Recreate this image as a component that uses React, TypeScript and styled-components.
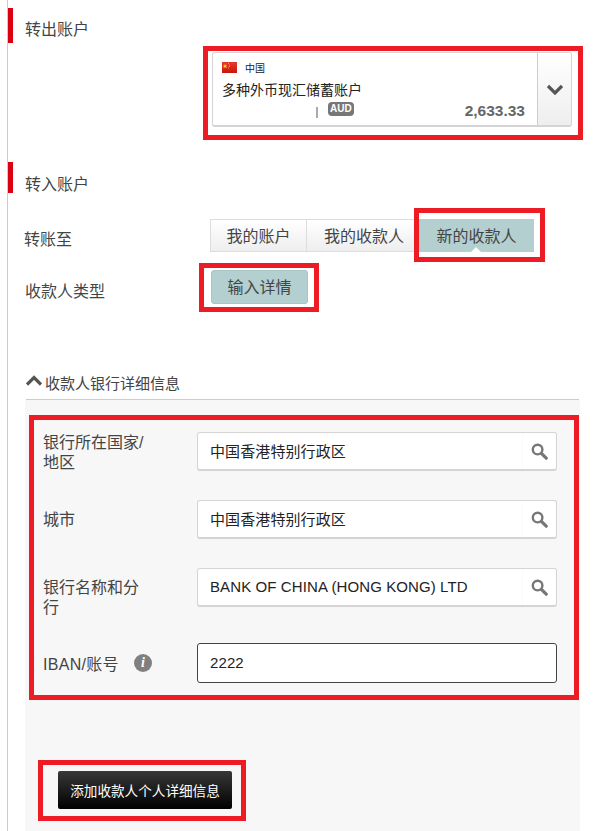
import React from 'react';
import styled, { createGlobalStyle } from 'styled-components';

const GlobalStyle = createGlobalStyle`
  html, body {
    margin: 0;
    padding: 0;
    background: #fff;
  }
  * {
    box-sizing: border-box;
  }
  body {
    font-family: 'Liberation Sans', 'Noto Sans CJK SC', sans-serif;
    color: #444;
  }
`;

const SearchIcon = () => (
  <svg width="17" height="17" viewBox="0 0 17 17" fill="none">
    <circle cx="6.6" cy="6.6" r="4.8" stroke="#777" strokeWidth="2.4" />
    <path d="M10.4 10.4 L15.2 15.2" stroke="#777" strokeWidth="3.2" strokeLinecap="round" />
  </svg>
);

const Chevron = ({ up }: { up?: boolean }) => (
  <svg width="16" height="11" viewBox="0 0 16 11" fill="none">
    <path
      d={up ? 'M1 9.5 L8 2.5 L15 9.5' : 'M1 2 L8 9 L15 2'}
      stroke="#555"
      strokeWidth="3.2"
    />
  </svg>
);

const Flag = () => (
  <svg width="15" height="11" viewBox="0 0 15 11">
    <defs>
      <linearGradient id="flagRed" x1="0" y1="0" x2="0" y2="1">
        <stop offset="0" stopColor="#e8382c" />
        <stop offset="1" stopColor="#c9140f" />
      </linearGradient>
    </defs>
    <rect width="15" height="11" fill="url(#flagRed)" />
    <path d="M3 1.5 L3.7 3.4 L5.6 3.4 L4.1 4.5 L4.7 6.3 L3 5.2 L1.4 6.3 L2 4.5 L0.5 3.4 L2.4 3.4 Z" fill="#f5d327" />
    <circle cx="6.5" cy="1.6" r="0.5" fill="#f5d327" />
    <circle cx="7.4" cy="3" r="0.5" fill="#f5d327" />
    <circle cx="7.4" cy="4.6" r="0.5" fill="#f5d327" />
    <circle cx="6.5" cy="6" r="0.5" fill="#f5d327" />
  </svg>
);

export default function App() {
  return (
    <>
      <GlobalStyle />
      <Page>
        <SectionTitle $height={35}>转出账户</SectionTitle>

        <AccountCard>
          <AccountBody>
            <CountryRow>
              <Flag />
              <CountryName>中国</CountryName>
            </CountryRow>
            <AccountName>多种外币现汇储蓄账户</AccountName>
            <BalanceRow>
              <Pipe />
              <Currency>AUD</Currency>
              <Amount>2,633.33</Amount>
            </BalanceRow>
          </AccountBody>
          <ChevronCell>
            <Chevron />
          </ChevronCell>
          <Highlight $inset="-7px -12px -15px -10px" />
        </AccountCard>

        <SecondTitle $height={31}>转入账户</SecondTitle>

        <ChoiceRow $inset={16} $top={26}>
          <ChoiceLabel $top={9}>转账至</ChoiceLabel>
          <Tabs>
            <Tab>我的账户</Tab>
            <Tab>我的收款人</Tab>
            <ActiveTab>
              新的收款人
              <Highlight $inset="-11px -11px -10px -5px" />
            </ActiveTab>
          </Tabs>
        </ChoiceRow>

        <ChoiceRow $inset={17} $top={18}>
          <ChoiceLabel $top={10}>收款人类型</ChoiceLabel>
          <TypeButton>
            输入详情
            <Highlight $inset="-8px -12px -9px -13px" />
          </TypeButton>
        </ChoiceRow>

        <CollapseHeader>
          <Chevron up />
          <span>收款人银行详细信息</span>
        </CollapseHeader>

        <Panel>
          <FormBlock>
            <FormRow $height={68}>
              <FormLabel>银行所在国家/地区</FormLabel>
              <Field>
                <FieldValue>中国香港特别行政区</FieldValue>
                <FieldIcon>
                  <SearchIcon />
                </FieldIcon>
              </Field>
            </FormRow>
            <FormRow $height={68}>
              <CityLabel>城市</CityLabel>
              <Field>
                <FieldValue>中国香港特别行政区</FieldValue>
                <FieldIcon>
                  <SearchIcon />
                </FieldIcon>
              </Field>
            </FormRow>
            <FormRow $height={75}>
              <CityLabel>银行名称和分行</CityLabel>
              <Field>
                <FieldValue>BANK OF CHINA (HONG KONG) LTD</FieldValue>
                <FieldIcon>
                  <SearchIcon />
                </FieldIcon>
              </Field>
            </FormRow>
            <FormRow $height={68}>
              <IbanLabel>
                <IbanText>IBAN/账号</IbanText>
                <InfoDot>i</InfoDot>
              </IbanLabel>
              <FocusedField>
                <FieldValue>2222</FieldValue>
              </FocusedField>
            </FormRow>
            <Highlight $inset="-17px -22px 11px -14px" />
          </FormBlock>

          <AddButton>
            添加收款人个人详细信息
            <Highlight $inset="-11px -14px -12px -20px" />
          </AddButton>
        </Panel>
      </Page>
    </>
  );
}

const Page = styled.main`
  display: flex;
  flex-direction: column;
  width: 591px;
  height: 831px;
  margin-left: 7px;
  padding-top: 8px;
  border-left: 1px solid #ccc;
  overflow: hidden;
`;

const Highlight = styled.span<{ $inset: string }>`
  position: absolute;
  inset: ${(p) => p.$inset};
  border: 5px solid #ed1c24;
  pointer-events: none;
`;

const SectionTitle = styled.h2<{ $height: number }>`
  flex: none;
  height: ${(p) => p.$height}px;
  margin: 0;
  padding: 10px 0 0 12px;
  border-left: 5px solid #db0011;
  color: #444;
  font-size: 16px;
  font-weight: normal;
  line-height: 24px;
`;

const SecondTitle = styled(SectionTitle)`
  margin-top: 35px;
  padding-top: 11px;
`;

const AccountCard = styled.section`
  position: relative;
  flex: none;
  display: flex;
  width: 360px;
  height: 75px;
  margin: 9px 0 0 204px;
  background: #fff;
  border: 1px solid #d4d4d4;
  border-bottom-width: 2px;
  border-radius: 3px;
`;

const AccountBody = styled.div`
  flex: 1;
  display: flex;
  flex-direction: column;
  padding: 7px 12px 0 9px;
`;

const CountryRow = styled.div`
  display: flex;
  align-items: center;
  gap: 8px;
  height: 14px;
`;

const CountryName = styled.span`
  color: #222;
  font-size: 10px;
`;

const AccountName = styled.div`
  margin-top: 6px;
  color: #222;
  font-size: 14px;
  line-height: 20px;
`;

const BalanceRow = styled.div`
  display: flex;
  align-items: center;
  height: 20px;
  padding-left: 94px;
`;

const Pipe = styled.span`
  width: 2px;
  height: 11px;
  margin-top: 5px;
  background: #aaa;
`;

const Currency = styled.span`
  margin: -2px 0 0 10px;
  padding: 0 2px;
  border-radius: 4px;
  background: #777;
  color: #fff;
  font-size: 10px;
  font-weight: bold;
  line-height: 14px;
`;

const Amount = styled.span`
  margin: 1px 0 0 auto;
  color: #666;
  font-size: 15.5px;
  font-weight: bold;
`;

const ChevronCell = styled.div`
  flex: none;
  display: flex;
  align-items: center;
  justify-content: center;
  width: 34px;
  border-left: 1px solid #ccc;
  border-radius: 0 3px 3px 0;
  background: linear-gradient(#fff, #eee);
`;

const ChoiceRow = styled.div<{ $inset: number; $top: number }>`
  flex: none;
  display: grid;
  grid-template-columns: 186px auto;
  justify-content: start;
  margin-top: ${(p) => p.$top}px;
  padding-left: ${(p) => p.$inset}px;
`;

const ChoiceLabel = styled.div<{ $top: number }>`
  padding-top: ${(p) => p.$top}px;
  color: #444;
  font-size: 16px;
  line-height: 24px;
`;

const Tabs = styled.div`
  display: flex;
  height: 33px;
`;

const Tab = styled.div`
  display: flex;
  align-items: center;
  justify-content: center;
  width: 97px;
  padding-bottom: 2px;
  background: linear-gradient(#fff, #eee);
  border: 1px solid #ddd;
  color: #444;
  font-size: 16px;

  & + & {
    width: 112px;
    padding-left: 3px;
    border-left: 0;
  }
`;

const ActiveTab = styled.div`
  position: relative;
  display: flex;
  align-items: center;
  justify-content: center;
  width: 115px;
  padding-bottom: 2px;
  background: #b3cfcf;
  color: #444;
  font-size: 16px;

  &::after {
    content: '';
    position: absolute;
    bottom: 0;
    left: 52px;
    border: 5px solid transparent;
    border-top: 0;
    border-bottom-color: #fff;
  }
`;

const TypeButton = styled.div`
  position: relative;
  display: flex;
  align-items: center;
  justify-content: center;
  width: 97px;
  height: 34px;
  padding-bottom: 3px;
  background: #b3cfcf;
  border: 1px solid #a8c4c4;
  border-radius: 3px;
  color: #444;
  font-size: 16px;
`;

const CollapseHeader = styled.div`
  flex: none;
  display: flex;
  align-items: flex-start;
  gap: 3px;
  width: 553px;
  height: 28px;
  margin: 68px 0 0 18px;
  border-bottom: 1px solid #ccc;
  color: #444;
  font-size: 15px;
  line-height: 24px;

  & > svg {
    margin-top: 3px;
  }
`;

const Panel = styled.section`
  flex: 1;
  width: 555px;
  margin-left: 17px;
  padding: 32px 0 0 18px;
  background: #f7f7f7;
`;

const FormBlock = styled.div`
  position: relative;
  width: 514px;
`;

const FormRow = styled.div<{ $height: number }>`
  display: grid;
  grid-template-columns: 154px 360px;
  align-items: start;
  height: ${(p) => p.$height}px;
`;

const FormLabel = styled.label`
  width: 105px;
  padding-top: 1px;
  color: #444;
  font-size: 16px;
  line-height: 19.5px;
`;

const CityLabel = styled(FormLabel)`
  padding-top: 10px;
`;

const IbanLabel = styled.label`
  display: flex;
  align-items: center;
  gap: 15px;
  height: 40px;
  color: #444;
  font-size: 16px;
`;

const IbanText = styled.span`
  letter-spacing: 0.3px;
`;

const InfoDot = styled.span`
  display: flex;
  align-items: center;
  justify-content: center;
  width: 18px;
  height: 18px;
  border-radius: 50%;
  background: #808080;
  color: #fff;
  font-family: 'Liberation Serif', serif;
  font-size: 14px;
  font-style: italic;
  font-weight: bold;
`;

const Field = styled.div`
  display: flex;
  align-items: center;
  height: 39px;
  padding-left: 12px;
  background: #fff;
  border: 1px solid #d4d4d4;
  border-bottom-width: 2px;
  border-radius: 3px;
`;

const FocusedField = styled(Field)`
  height: 40px;
  border: 1px solid #444;
`;

const FieldValue = styled.span`
  flex: 1;
  margin-top: -2px;
  color: #222;
  font-size: 15px;
  letter-spacing: 0.1px;
`;

const FieldIcon = styled.div`
  display: flex;
  align-items: center;
  justify-content: center;
  width: 34px;
  height: 100%;
  border-left: 1px solid #fafafa;
`;

const AddButton = styled.button`
  position: relative;
  display: block;
  width: 174px;
  height: 38px;
  margin: 60px 0 0 15px;
  padding: 0 0 1px;
  background: linear-gradient(#383838, #000);
  border: 0;
  border-radius: 2px;
  color: #fff;
  font-family: inherit;
  font-size: 13.6px;
`;
